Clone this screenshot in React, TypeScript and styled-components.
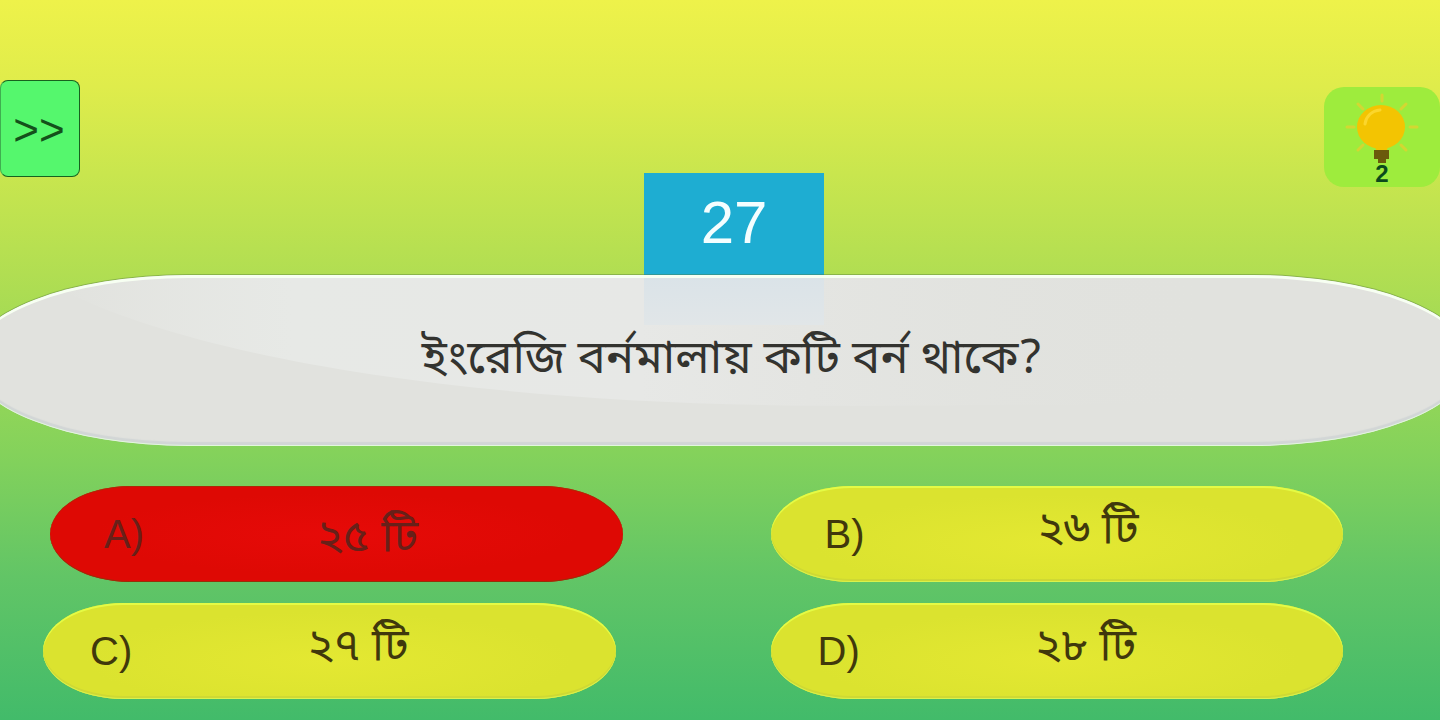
import React from 'react';
import styled, { createGlobalStyle } from 'styled-components';

const GlobalStyle = createGlobalStyle`
  *, *::before, *::after { box-sizing: border-box; }
  body { margin: 0; }
  button { font: inherit; color: inherit; border: 0; cursor: pointer; }
`;

const latin = `"Liberation Sans", Arial, sans-serif`;
const bengali = `"Noto Sans Bengali", "Liberation Sans", sans-serif`;

const Page = styled.main`
  display: flex;
  flex-direction: column;
  min-height: 100vh;
  padding: 80px 0 21px;
  overflow: hidden;
  font-family: ${latin};
  background: linear-gradient(
    180deg,
    #eef24a 0%,
    #dfec4b 12%,
    #c9e64e 24%,
    #b1de52 38%,
    #84d25b 63%,
    #62c566 80%,
    #42bb6a 100%
  );
`;

const TopBar = styled.header`
  display: grid;
  grid-template-columns: 1fr auto 1fr;
  align-items: start;
`;

const SkipButton = styled.button`
  justify-self: start;
  width: 80px;
  height: 97px;
  padding: 2px 2px 0 0;
  border: 1px solid #17621f;
  border-left-color: #3fae50;
  border-radius: 8px;
  background: #55f76d;
  color: #14501b;
  font-size: 44px;
  line-height: 48px;
  text-align: center;
`;

const Counter = styled.output`
  width: 180px;
  height: 152px;
  margin: 93px 0 0 28px;
  padding-top: 18px;
  background: #1eadd2;
  color: #f4feff;
  font-size: 60px;
  line-height: 64px;
  text-align: center;
`;

const HintButton = styled.button`
  justify-self: end;
  display: flex;
  flex-direction: column;
  align-items: center;
  width: 116px;
  height: 100px;
  margin-top: 7px;
  padding: 5px 0 0;
  border-radius: 20px;
  background: #9eec3d;
  color: #0b4a1c;
  font-size: 24px;
  font-weight: 700;
  line-height: 20px;
`;

const QuestionPanel = styled.section`
  position: relative;
  display: flex;
  justify-content: center;
  align-items: center;
  min-height: 171px;
  margin: -50px -30px 0;
  padding: 0 16px 0 40px;
  overflow: hidden;
  border-radius: 218px / 85px;
  background: #e1e2de;
  box-shadow: 0 -1px 0 rgba(80, 120, 60, 0.4);
`;

const PanelShine = styled.svg`
  position: absolute;
  inset: 0;
  width: 100%;
  height: 100%;
`;

const PanelEdge = styled.div`
  position: absolute;
  inset: 0;
  border-radius: inherit;
  box-shadow: inset 0 3px 0 #f7fff2, inset 0 -1px 0 #e2f9dc, inset 0 -4px 1px #d2d6d6;
`;

const Question = styled.h1`
  position: relative;
  margin: 0;
  color: #33332f;
  font-family: ${bengali};
  font-size: 47px;
  font-weight: 400;
  line-height: 64px;
  text-align: center;
`;

const Answers = styled.section`
  display: flex;
  flex-direction: column;
  gap: 21px;
  margin-top: 40px;
`;

const AnswerButton = styled.button<{ $wrong?: boolean }>`
  display: flex;
  align-items: center;
  height: 96px;
  padding: 0 32px 0 var(--letter-inset);
  border-radius: 80px / 48px;
  color: ${(p) => (p.$wrong ? '#682019' : '#40380c')};
  background: ${(p) =>
    p.$wrong
      ? 'radial-gradient(ellipse at 50% 50%, #e60a08 0%, #de0904 60%)'
      : 'radial-gradient(ellipse at 50% 60%, #e4e832 0%, #dbe32f 60%)'};
  box-shadow: ${(p) =>
    p.$wrong
      ? 'inset 0 1px 0 #b02806, inset 0 -1px 0 #983008'
      : 'inset 0 2px 0 #e4fb45, inset 0 -1px 0 #d9f24c, inset 0 -3px 0 #cfd934'};
`;

const AnswerRow = styled.div<{ $inset: number }>`
  --letter-inset: ${(p) => p.$inset + 4}px;
  display: grid;
  grid-template-columns: 1fr 1fr;
  column-gap: ${(p) => 198 - p.$inset}px;
  padding: 0 97px 0 ${(p) => p.$inset}px;
`;

const Letter = styled.span`
  font-size: 40px;
  line-height: 48px;
`;

const AnswerText = styled.span<{ $wrong?: boolean }>`
  flex: 1;
  padding: ${(p) => (p.$wrong ? '12px 0 0' : '0 0 4px')};
  font-family: ${bengali};
  font-size: 45px;
  line-height: 64px;
  text-align: center;
`;

const BulbIcon = () => (
  <svg width="76" height="72" viewBox="0 0 76 72" aria-hidden="true">
    <path
      d="M38 3v6M14 12l5 5M62 12l-5 5M3 35h7M66 35h7M14 58l5-5M62 58l-5-5"
      stroke="#d3d732"
      strokeWidth="3"
      strokeLinecap="round"
    />
    <ellipse cx="37" cy="35" rx="24" ry="22" fill="#f3c402" />
    <path d="M31 54h13l-1 4h-11z" fill="#f3c402" />
    <path d="M21 32c1-8 7-13 15-14" fill="none" stroke="#fbd62c" strokeWidth="3" strokeLinecap="round" />
    <path d="M30 58h15v9h-3v4h-8v-4h-4z" fill="#6b5a0c" />
  </svg>
);

const rows = [
  {
    inset: 50,
    answers: [
      { letter: 'A', text: '২৫ টি', wrong: true },
      { letter: 'B', text: '২৬ টি', wrong: false },
    ],
  },
  {
    inset: 43,
    answers: [
      { letter: 'C', text: '২৭ টি', wrong: false },
      { letter: 'D', text: '২৮ টি', wrong: false },
    ],
  },
];

export default function App() {
  return (
    <Page>
      <GlobalStyle />
      <TopBar>
        <SkipButton type="button">&gt;&gt;</SkipButton>
        <Counter>27</Counter>
        <HintButton type="button">
          <BulbIcon />
          2
        </HintButton>
      </TopBar>
      <QuestionPanel>
        <PanelShine viewBox="0 0 1500 171" preserveAspectRatio="none" aria-hidden="true">
          <defs>
            <linearGradient id="shine" x1="0" y1="0" x2="1" y2="0">
              <stop offset="0" stopColor="#e9ebe8" stopOpacity="0" />
              <stop offset="0.2" stopColor="#e7e9e6" />
              <stop offset="0.5" stopColor="#e7e8e6" />
              <stop offset="1" stopColor="#e1e2de" stopOpacity="0" />
            </linearGradient>
            <linearGradient id="tint" x1="0" y1="0" x2="0" y2="1">
              <stop offset="0" stopColor="#dae3e8" />
              <stop offset="1" stopColor="#e1e6e8" />
            </linearGradient>
          </defs>
          <path d="M90 0L98 18C230 82 500 131 882 131L1250 129V0Z" fill="url(#shine)" />
          <rect x="674" y="0" width="180" height="50" fill="url(#tint)" />
        </PanelShine>
        <PanelEdge />
        <Question>ইংরেজি বর্নমালায় কটি বর্ন থাকে?</Question>
      </QuestionPanel>
      <Answers>
        {rows.map((row) => (
          <AnswerRow key={row.inset} $inset={row.inset}>
            {row.answers.map((a) => (
              <AnswerButton key={a.letter} type="button" $wrong={a.wrong}>
                <Letter>{a.letter})</Letter>
                <AnswerText $wrong={a.wrong}>{a.text}</AnswerText>
              </AnswerButton>
            ))}
          </AnswerRow>
        ))}
      </Answers>
    </Page>
  );
}
